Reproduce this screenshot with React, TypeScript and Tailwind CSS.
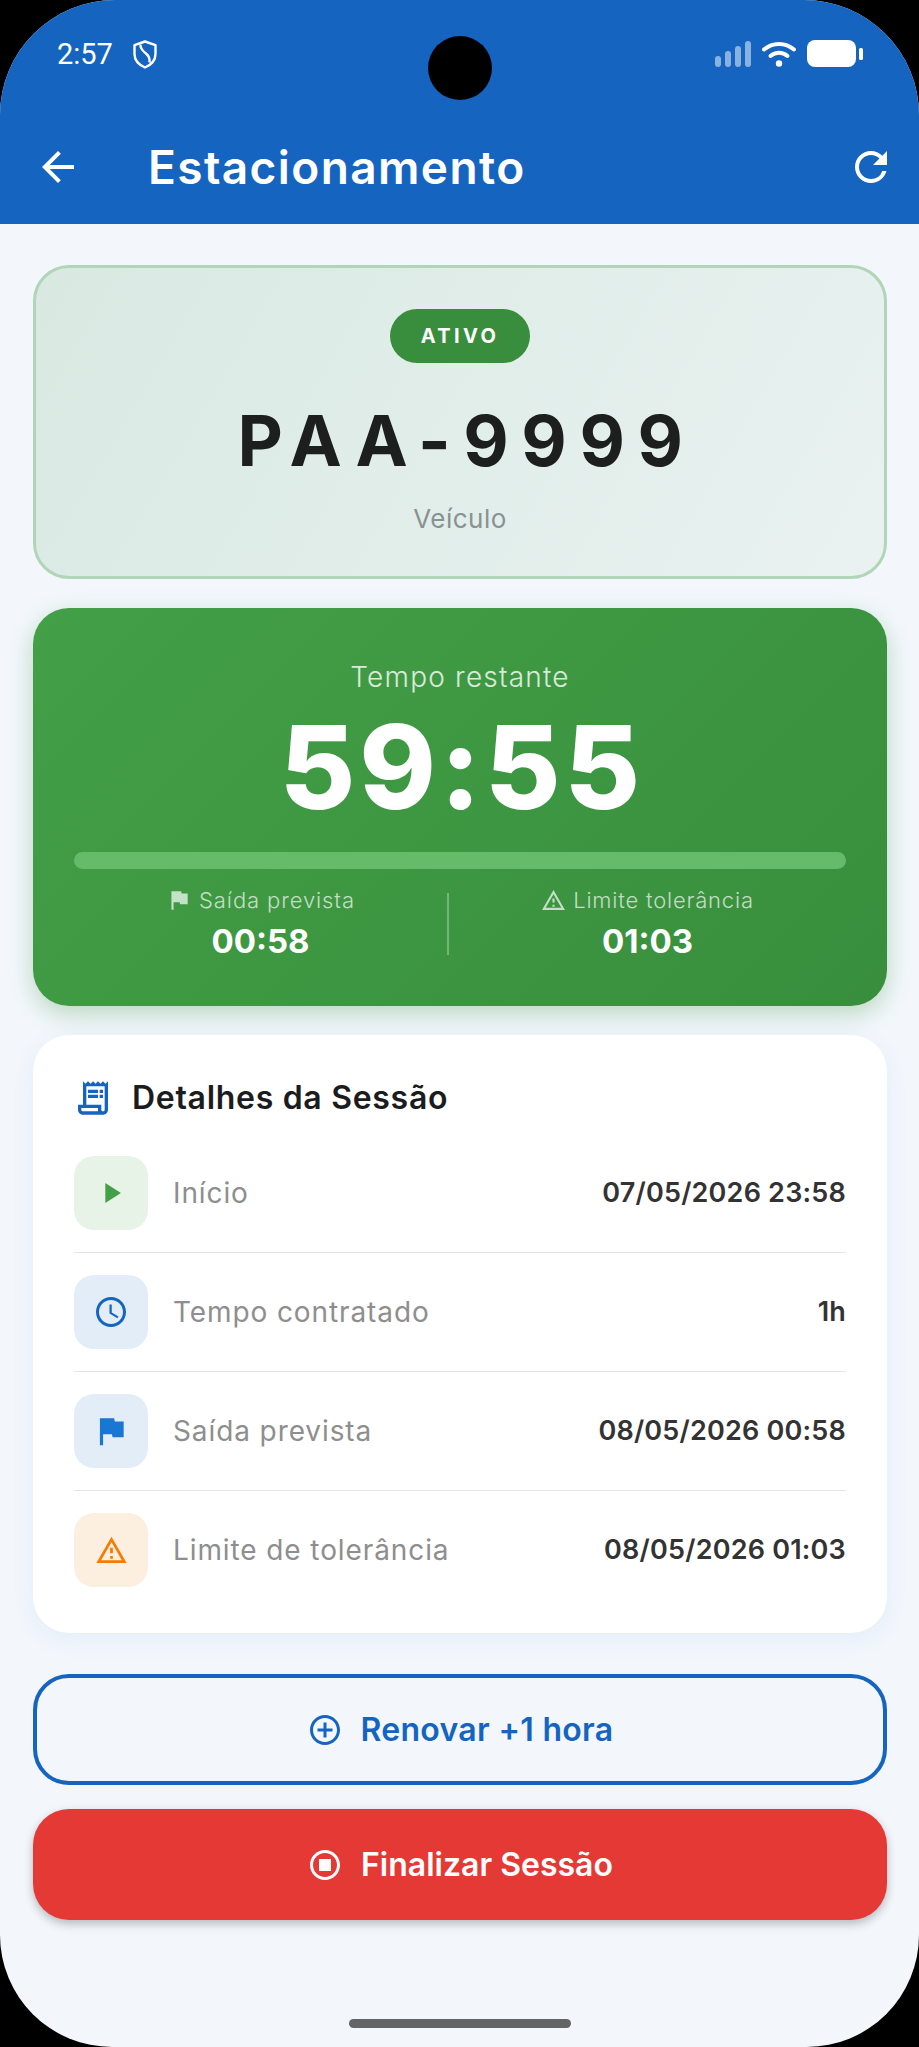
import {
  MdAccessTime,
  MdAddCircleOutline,
  MdArrowBack,
  MdFlag,
  MdOutlineReceiptLong,
  MdOutlineStopCircle,
  MdOutlineWarningAmber,
  MdPlayArrow,
  MdRefresh,
} from 'react-icons/md';

const details = [
  { icon: <MdPlayArrow size={34} />, box: 'bg-[#E8F3E8] text-[#43A047]', label: 'Início', value: '07/05/2026 23:58' },
  { icon: <MdAccessTime size={36} />, box: 'bg-[#E3EDF8] text-[#1565C0]', label: 'Tempo contratado', value: '1h' },
  { icon: <MdFlag size={38} />, box: 'bg-[#E3EDF8] text-[#1976D2]', label: 'Saída prevista', value: '08/05/2026 00:58' },
  { icon: <MdOutlineWarningAmber size={33} />, box: 'bg-[#FDEFE0] text-[#F57C00]', label: 'Limite de tolerância', value: '08/05/2026 01:03' },
];

const StatusIcons = () => (
  <div className="flex items-center gap-[11px]">
    <svg width="36" height="26" viewBox="0 0 36 26" fill="#fff" fillOpacity="0.5">
      <rect x="0" y="15" width="6" height="11" rx="3" />
      <rect x="10" y="10" width="6" height="16" rx="3" />
      <rect x="20" y="5" width="6" height="21" rx="3" />
      <rect x="30" y="0" width="6" height="26" rx="3" />
    </svg>
    <svg width="34" height="26" viewBox="0 0 34 26" fill="none" stroke="#fff" strokeWidth="4" strokeLinecap="round">
      <path d="M2 8.5C10.5 1 23.5 1 32 8.5" />
      <path d="M8.5 15C13.5 10.8 20.5 10.8 25.5 15" />
      <circle cx="17" cy="22.5" r="3.2" fill="#fff" stroke="none" />
    </svg>
    <svg width="56" height="28" viewBox="0 0 56 28" fill="#fff">
      <rect x="0" y="0" width="49" height="27" rx="8" />
      <rect x="52" y="8" width="4" height="12" rx="1.5" />
    </svg>
  </div>
);

const App = () => {
  return (
    <div className="w-[919px] h-[2047px] bg-black font-['Inter',sans-serif]">
      <div className="relative w-full h-full rounded-t-[115px] rounded-b-[112px] overflow-hidden bg-[#F3F7FC] flex flex-col">
        {/* Header */}
        <header className="h-[224px] bg-[#1565C0] text-white shrink-0">
          <div className="flex items-center justify-between pt-[36px] pl-[57px] pr-[56px] h-[72px]">
            <div className="flex items-center gap-[20px]">
              <span className="font-['Roboto',sans-serif] text-[29px] leading-[36px]">2:57</span>
              <svg width="24" height="29" viewBox="0 0 24 29" fill="none" stroke="#fff" strokeWidth="2.4" strokeLinejoin="round">
                <path d="M12 1.5 22.5 5.2V14c0 6.2-4.3 10.8-10.5 13.5C5.800 24.800 1.500 20.200 1.500 14V5.200Z" />
                <path d="M7.500 4.500C7 9 10 11 13 13.500s4 5.500 3.500 9" />
              </svg>
            </div>
            <StatusIcons />
          </div>
          <div className="flex items-center h-[48px] mt-[71px] pl-[34px] pr-[24px]">
            <MdArrowBack size={48} className="shrink-0" />
            <h1 className="ml-[66px] text-[46px] leading-[48px] font-semibold tracking-[1.4px]">Estacionamento</h1>
            <MdRefresh size={48} className="ml-auto shrink-0" />
          </div>
        </header>

        {/* Camera cutout */}
        <div className="absolute top-[36px] left-[428px] w-[64px] h-[64px] rounded-full bg-black" />

        <main className="flex flex-col pl-[33px] pr-[32px] pt-[41px]">
          {/* Plate */}
          <section className="h-[314px] rounded-[36px] border-[3px] border-[#B1D5B8] bg-[linear-gradient(120deg,#D9E9E2,#E9F2F1)] flex flex-col items-center pt-[41px]">
            <span className="w-[140px] h-[54px] rounded-[27px] bg-[#388E3C] text-white flex items-center justify-center text-[20px] font-bold tracking-[3.4px]">ATIVO</span>
            <p className="mt-[28px] ml-[13px] h-[100px] text-[70px] leading-[100px] font-bold tracking-[12.6px] text-[#1C1F1E]">PAA-9999</p>
            <p className="mt-[12px] text-[26px] leading-[32px] tracking-[0.5px] text-[#8A9291]">Veículo</p>
          </section>

          {/* Timer */}
          <section className="mt-[29px] h-[398px] rounded-[36px] bg-[linear-gradient(135deg,#43A047,#388E3C)] shadow-[0_8px_24px_rgba(56,142,60,0.3)] text-white flex flex-col px-[41px] pt-[51px]">
            <p className="text-center text-[28px] leading-[36px] font-light tracking-[1.2px] text-white/80">Tempo restante</p>
            <p className="mt-[12px] ml-[4px] text-center text-[116px] leading-[120px] font-extrabold tracking-[4px]">59:55</p>
            <div className="mt-[25px] h-[17px] rounded-full bg-[#66BB6A]" />
            <div className="mt-[17px] flex items-center">
              <div className="w-[373px] flex flex-col items-center">
                <div className="flex items-center gap-[7px] text-white/70 text-[22px] leading-[28px] font-light tracking-[0.9px]">
                  <MdFlag size={26} />
                  <span>Saída prevista</span>
                </div>
                <span className="mt-[7px] text-[33px] leading-[40px] font-bold">00:58</span>
              </div>
              <div className="w-[2px] h-[62px] bg-white/30" />
              <div className="flex-1 flex flex-col items-center">
                <div className="flex items-center gap-[7px] text-white/70 text-[22px] leading-[28px] font-light tracking-[0.8px]">
                  <MdOutlineWarningAmber size={25} />
                  <span>Limite tolerância</span>
                </div>
                <span className="mt-[7px] text-[33px] leading-[40px] font-bold">01:03</span>
              </div>
            </div>
          </section>

          {/* Session details */}
          <section className="mt-[29px] rounded-[36px] bg-white shadow-[0_6px_24px_rgba(21,101,192,0.07)] px-[41px] pt-[42px] pb-[24px]">
            <div className="flex items-center h-[42px]">
              <MdOutlineReceiptLong size={40} className="text-[#1565C0] -ml-[1px] shrink-0" />
              <h2 className="ml-[19px] text-[32px] leading-[42px] font-semibold tracking-[0.7px] text-[#1A1C1E]">Detalhes da Sessão</h2>
            </div>
            <div className="mt-[15px] flex flex-col">
              {details.map((row, idx) => (
                <div key={idx} className={`flex items-center py-[22px] ${idx < details.length - 1 ? 'border-b border-[#E2E4E6]' : ''}`}>
                  <div className={`w-[74px] h-[74px] rounded-[20px] flex items-center justify-center shrink-0 ${row.box}`}>{row.icon}</div>
                  <span className="ml-[25px] text-[28px] leading-[36px] text-[#8E8E8E] tracking-[0.9px]">{row.label}</span>
                  <span className="ml-auto text-[27px] leading-[36px] font-semibold tracking-[0.2px] text-[#333333]">{row.value}</span>
                </div>
              ))}
            </div>
          </section>

          {/* Actions */}
          <button className="mt-[41px] h-[111px] rounded-[36px] border-[4px] border-[#1565C0] text-[#1565C0] flex items-center justify-center gap-[18px] text-[32px] font-semibold tracking-[0.3px]">
            <MdAddCircleOutline size={36} />
            <span>Renovar +1 hora</span>
          </button>
          <button className="mt-[24px] h-[111px] rounded-[36px] bg-[#E53935] text-white flex items-center justify-center gap-[18px] text-[32px] font-semibold shadow-[0_4px_10px_rgba(0,0,0,0.25)]">
            <MdOutlineStopCircle size={36} />
            <span>Finalizar Sessão</span>
          </button>
        </main>

        {/* Home indicator */}
        <div className="absolute bottom-[19px] left-[349px] w-[222px] h-[9px] rounded-full bg-[#636466]" />
      </div>
    </div>
  );
};

export default App;
